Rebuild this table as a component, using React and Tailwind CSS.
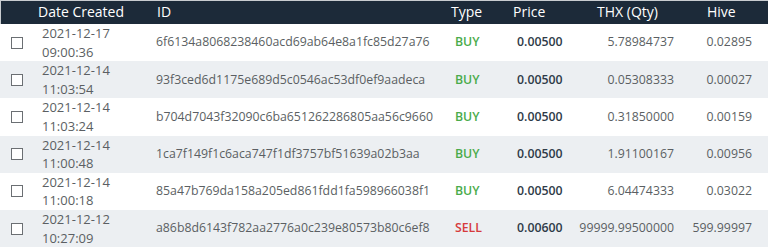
import React from 'react';

const orders = [
  { date: '2021-12-17', time: '09:00:36', id: '6f6134a8068238460acd69ab64e8a1fc85d27a76', type: 'BUY', price: '0.00500', qty: '5.78984737', hive: '0.02895' },
  { date: '2021-12-14', time: '11:03:54', id: '93f3ced6d1175e689d5c0546ac53df0ef9aadeca', type: 'BUY', price: '0.00500', qty: '0.05308333', hive: '0.00027' },
  { date: '2021-12-14', time: '11:03:24', id: 'b704d7043f32090c6ba651262286805aa56c9660', type: 'BUY', price: '0.00500', qty: '0.31850000', hive: '0.00159' },
  { date: '2021-12-14', time: '11:00:48', id: '1ca7f149f1c6aca747f1df3757bf51639a02b3aa', type: 'BUY', price: '0.00500', qty: '1.91100167', hive: '0.00956' },
  { date: '2021-12-14', time: '11:00:18', id: '85a47b769da158a205ed861fdd1fa598966038f1', type: 'BUY', price: '0.00500', qty: '6.04474333', hive: '0.03022' },
  { date: '2021-12-12', time: '10:27:09', id: 'a86b8d6143f782aa2776a0c239e80573b80c6ef8', type: 'SELL', price: '0.00600', qty: '99999.99500000', hive: '599.99997' },
];

export default function App() {
  return (
    <div className="w-[768px] h-[247px] overflow-hidden bg-white" style={{ fontFamily: '"Open Sans", sans-serif' }}>
      <div className="w-[800px]">
        {/* Header */}
        <div className="flex h-[24px] bg-[#1c2a39] text-white text-[14px] leading-[22px] border-t border-l border-[#c8ccd0]">
          <div className="w-[31px] shrink-0" />
          <div className="w-[124px] shrink-0 pl-[6px]">Date Created</div>
          <div className="w-[295px] shrink-0 pl-[1px]">ID</div>
          <div className="w-[62px] shrink-0">Type</div>
          <div className="w-[84px] shrink-0">Price</div>
          <div className="w-[110px] shrink-0">THX (Qty)</div>
          <div className="w-[58px] shrink-0">Hive</div>
          <div className="shrink-0 pl-[7px]">Actions</div>
        </div>

        {/* Rows */}
        {orders.map((o, i) => (
          <div
            key={o.id}
            className={`flex items-center h-[37.2px] text-[12.3px] leading-[18.5px] text-[#5b5f63] ${
              i % 2 === 1 ? 'bg-[#eceff2]' : 'bg-white'
            }`}
          >
            <div className="w-[32px] shrink-0 pl-[11px] flex items-center">
              <span className="block w-[12px] h-[12px] border border-[#6b6f73] bg-white" />
            </div>
            <div className="w-[124px] shrink-0 pl-[10px] text-[13px]">
              <div>{o.date}</div>
              <div>{o.time}</div>
            </div>
            <div className="w-[299px] shrink-0">{o.id}</div>
            <div className={`w-[62px] shrink-0 font-semibold ${o.type === 'BUY' ? 'text-[#4aab4a]' : 'text-[#d63a3c]'}`}>
              {o.type}
            </div>
            <div className="w-[57px] shrink-0 font-semibold text-[#2f3b48]">{o.price}</div>
            <div className="w-[100px] shrink-0 text-right">{o.qty}</div>
            <div className="w-[78px] shrink-0 text-right">{o.hive}</div>
          </div>
        ))}
      </div>
    </div>
  );
}
